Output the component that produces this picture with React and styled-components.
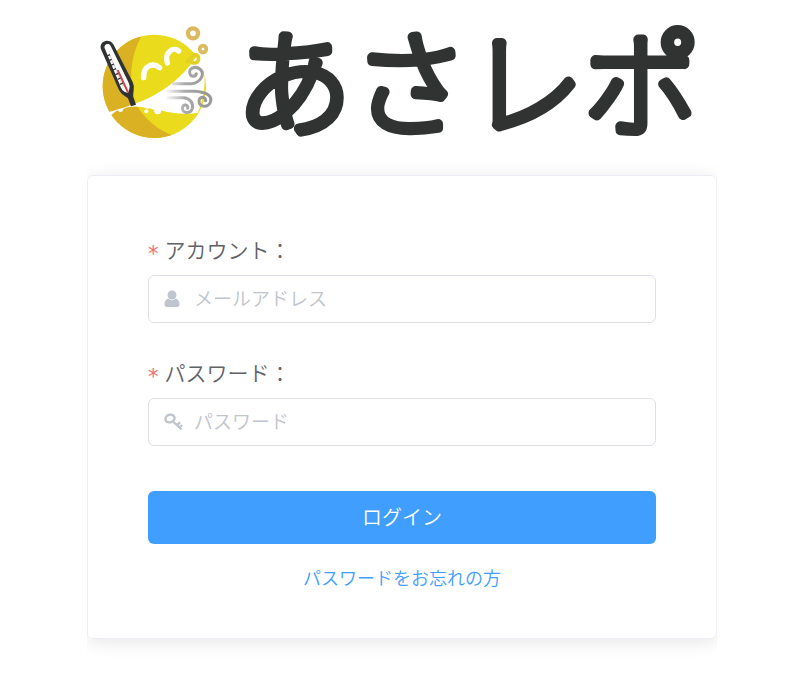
import React from 'react'
import styled, { createGlobalStyle } from 'styled-components'

const App = () => (
  <>
    <GlobalStyle />
    <Page>
      <Brand>
        <LemonLogo />
        <BrandName viewBox='0 0 482 160'>
          <text x='1' y='112'>
            あさレポ
          </text>
        </BrandName>
      </Brand>
      <Card onSubmit={e => e.preventDefault()}>
        <Field>
          <Label htmlFor='account'>
            <Required>*</Required>アカウント：
          </Label>
          <InputWrapper>
            <UserIcon />
            <Input id='account' type='email' placeholder='メールアドレス' />
          </InputWrapper>
        </Field>
        <Field>
          <Label htmlFor='password'>
            <Required>*</Required>パスワード：
          </Label>
          <InputWrapper>
            <KeyIcon />
            <Input id='password' type='password' placeholder='パスワード' />
          </InputWrapper>
        </Field>
        <LoginButton type='submit'>ログイン</LoginButton>
        <ForgotLink href='#forgot'>パスワードをお忘れの方</ForgotLink>
      </Card>
    </Page>
  </>
)

export default App

const LemonLogo = () => (
  <LogoSvg viewBox='0 0 405 405' aria-hidden='true'>
    <defs>
      <clipPath id='lemon'>
        <circle cx='193' cy='214' r='155' />
      </clipPath>
      <linearGradient id='wind' gradientUnits='userSpaceOnUse' x1='225' y1='0' x2='345' y2='0'>
        <stop offset='0' stopColor='#fff' />
        <stop offset='0.5' stopColor='#aaa' />
        <stop offset='1' stopColor='#999' />
      </linearGradient>
    </defs>
    <g clipPath='url(#lemon)'>
      <rect x='30' y='50' width='330' height='330' fill='#eadc1c' />
      <path d='M162 50C120 115 112 205 140 270C165 315 205 345 250 362L200 390L20 390V50Z' fill='#d9b122' />
    </g>
    <path
      d='M48 293C155 265 240 230 306 143L330 110L375 120L352 178L344 180C345 225 337 262 323 294C290 299 245 296 211 286A9 9 0 0 1 193 286C188 282 182 280 174 281C150 273 120 272 100 282A9 9 0 0 1 83 286C76 290 70 295 62 302Z'
      fill='#fff'
    />
    <circle cx='169' cy='289' r='6' fill='#fff' />
    <circle cx='203' cy='288' r='10' fill='#fff' />
    <g fill='none' stroke='#fff' strokeWidth='16' strokeLinecap='round'>
      <path d='M161 188C160 150 190 142 209 158' />
      <path d='M232 144C222 110 252 94 266 108' />
    </g>
    <g fill='none' stroke='#dbb95c'>
      <circle cx='309' cy='55' r='15' strokeWidth='13' />
      <circle cx='339' cy='102' r='10' strokeWidth='11' />
      <path d='M292 140L311 119Q325 118 326 131Q325 145 311 144Q302 143 303 134' stroke='#e2d024' strokeWidth='11' strokeLinecap='round' />
    </g>
    <g fill='none' stroke='url(#wind)' strokeWidth='9' strokeLinecap='round'>
      <path d='M250 206H305C331 203 346 178 331 163C315 150 293 162 300 177C304 187 317 186 319 176' />
      <path d='M225 229H315C341 231 366 238 362 258C358 280 326 278 327 258C328 244 347 243 347 257' />
      <path d='M230 248H280C300 249 311 265 307 281C302 297 276 296 277 279C279 266 296 268 293 280' />
    </g>
    <path d='M34 105C23 82 55 66 70 88L128 201Q133 211 131 226L129 244L138 269L123 274L114 250L100 240Q93 236 87 225Z' fill='#303332' />
    <path d='M45 102C38 89 56 81 62 93L116 203Q120 210 118 222L114 234L103 230Q97 227 93 218Z' fill='#fff' />
    <path d='M57 116L100 213' stroke='#d6d6d6' strokeWidth='4' />
    <path d='M84 167L113 230' stroke='#d84548' strokeWidth='6' strokeLinecap='round' />
    <path
      d='M51 123L60 119M56 137L65 133M63 151L72 147M69 165L78 161M76 179L85 175M83 193L92 189M90 208L99 204'
      stroke='#303332'
      strokeWidth='4'
    />
  </LogoSvg>
)

const UserIcon = () => (
  <FieldIcon viewBox='0 0 20 20' aria-hidden='true'>
    <circle cx='8' cy='6' r='4.5' />
    <path d='M4 9.5Q8 13 12 9.5Q15.5 11 15.500 15.500Q15.500 18 13 18H3Q0.500 18 0.500 15.500Q0.500 11 4 9.500Z' />
  </FieldIcon>
)

const KeyIcon = () => (
  <FieldIcon viewBox='0 0 20 20' aria-hidden='true'>
    <g fill='none' stroke='currentColor' strokeWidth='2.4'>
      <ellipse cx='6' cy='6.500' rx='4.600' ry='3.800' transform='rotate(-20 6 6.500)' />
      <path d='M9 9.500L17.500 17.500M13 13L16 10.500M15.500 15.500L18 13' />
    </g>
  </FieldIcon>
)

const GlobalStyle = createGlobalStyle`
  * {
    box-sizing: border-box;
  }

  body {
    margin: 0;
    background-color: #fff;
    color: #606266;
    font-family: 'Noto Sans CJK JP', sans-serif;
    font-weight: 350;
  }
`

const Page = styled.main`
  display: flex;
  flex-direction: column;
  align-items: center;

  padding: 15px 0 40px 6px;
`

const Brand = styled.header`
  display: flex;
  align-items: flex-start;
  gap: 10px;

  width: 100%;
  max-width: 630px;
  height: 160px;
`

const LogoSvg = styled.svg`
  flex: none;
  width: 135px;
  height: 135px;
  margin-left: 3px;
`

const BrandName = styled.svg`
  flex: 1;
  min-width: 0;
  height: 160px;

  fill: #303332;
  stroke: #303332;
  stroke-width: 10px;
  stroke-linejoin: round;
  font-size: 116px;
  font-weight: 100;
`

const Card = styled.form`
  display: flex;
  flex-direction: column;

  width: 100%;
  max-width: 630px;
  padding: 55px 60px 47px;
  border: 1px solid #ebeef5;
  border-radius: 6px;
  box-shadow: 0 3px 18px rgba(0, 0, 0, 0.1);
  clip-path: inset(-24px 0);
`

const Field = styled.div`
  display: flex;
  flex-direction: column;

  margin-bottom: 31px;
`

const Label = styled.label`
  display: flex;
  align-items: center;
  gap: 6px;

  margin-bottom: 8px;

  font-size: 21px;
  line-height: 36px;
`

const Required = styled.span`
  padding-top: 10px;

  color: #f56c6c;
  font-family: 'DejaVu Sans', sans-serif;
  font-weight: 400;
  line-height: 26px;
`

const InputWrapper = styled.div`
  display: flex;
  align-items: center;
  gap: 8px;

  height: 48px;
  padding: 0 15px;
  border: 1px solid #dcdfe6;
  border-radius: 6px;

  &:focus-within {
    border-color: #409eff;
  }
`

const FieldIcon = styled.svg`
  flex: none;
  width: 20px;
  height: 20px;

  color: #c0c4cc;
  fill: currentColor;
`

const Input = styled.input`
  flex: 1;
  min-width: 0;
  height: 46px;
  padding: 0 2px 3px;
  border: 0;
  outline: 0;
  background: none;

  color: #606266;
  font: inherit;
  font-size: 19px;

  &::placeholder {
    color: #c0c4cc;
  }
`

const LoginButton = styled.button`
  height: 53px;
  margin-top: 14px;
  padding: 0 0 2px;
  border: 0;
  border-radius: 6px;
  background-color: #409eff;

  color: #fff;
  font: inherit;
  font-size: 20px;
  cursor: pointer;
`

const ForgotLink = styled.a`
  align-self: center;
  margin-top: 19px;

  color: #409eff;
  font-size: 18px;
  line-height: 28px;
  text-decoration: none;
`
